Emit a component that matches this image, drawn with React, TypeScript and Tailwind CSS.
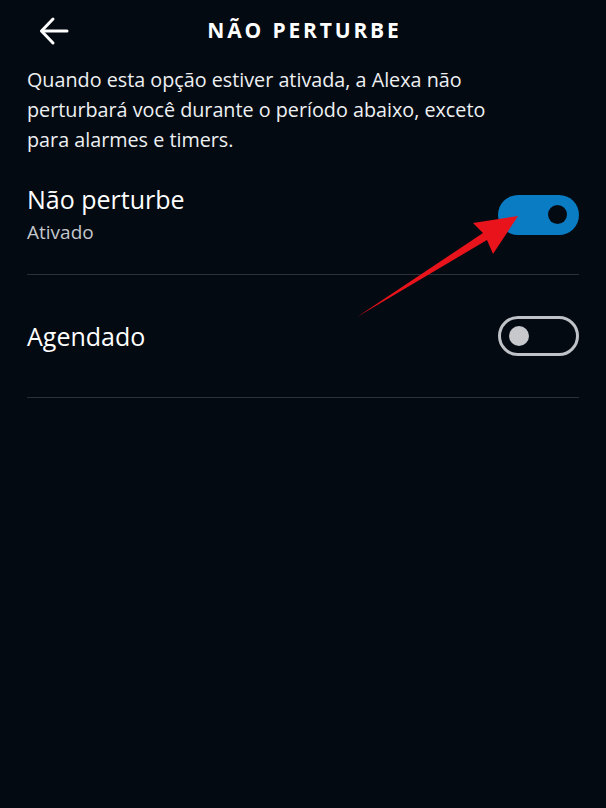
import React from 'react';

function Toggle({ on }: { on: boolean }) {
  if (on) {
    return (
      <div className="flex h-[40px] w-[81px] items-center justify-end rounded-full bg-[#0a7cc4] pr-[12px]">
        <div className="h-[19px] w-[19px] rounded-full bg-[#030a12]" />
      </div>
    );
  }
  return (
    <div className="flex h-[40px] w-[81px] items-center rounded-full border-[3px] border-[#bfc3c7] pl-[8px]">
      <div className="h-[20px] w-[20px] rounded-full bg-[#c6c8cc]" />
    </div>
  );
}

export default function App() {
  return (
    <div
      className="relative h-[808px] w-[606px] overflow-hidden bg-[#030a12] text-white"
      style={{ fontFamily: '"Open Sans", "Noto Sans", sans-serif' }}
    >
      {/* header */}
      <div className="relative flex h-[62px] items-center justify-center">
        <button className="absolute left-[38px] top-[16px] text-white">
          <svg width="32" height="30" viewBox="0 0 32 30" fill="none" stroke="currentColor" strokeWidth="3" strokeLinecap="round" strokeLinejoin="round">
            <path d="M29 15H4" />
            <path d="M15 3L3.5 15L15 27" />
          </svg>
        </button>
        <h1 className="pl-[3px] text-[21px] font-bold tracking-[0.135em]">NÃO PERTURBE</h1>
      </div>

      <div className="px-[27px]">
        <p className="mt-[3px] max-w-[500px] text-[19.75px] leading-[30px] text-[#eef0f2]">
          Quando esta opção estiver ativada, a Alexa não perturbará você durante o período abaixo, exceto para alarmes e timers.
        </p>

        <div className="flex h-[120px] items-center justify-between border-b border-[#2a3138]">
          <div className="flex flex-col">
            <span className="text-[25px] leading-[32px]">Não perturbe</span>
            <span className="mt-[2px] text-[19px] leading-[30px] text-[#c3c7cb]">Ativado</span>
          </div>
          <Toggle on />
        </div>

        <div className="flex h-[123px] items-center justify-between border-b border-[#2a3138]">
          <span className="text-[25px] leading-[32px]">Agendado</span>
          <Toggle on={false} />
        </div>
      </div>

      {/* red annotation arrow */}
      <svg className="absolute left-0 top-0" width="606" height="808" viewBox="0 0 606 808">
        <path d="M357 317 L483 233 L473 223 L518 216 L493 254 L487 240 Z" fill="#e8131b" />
      </svg>
    </div>
  );
}
